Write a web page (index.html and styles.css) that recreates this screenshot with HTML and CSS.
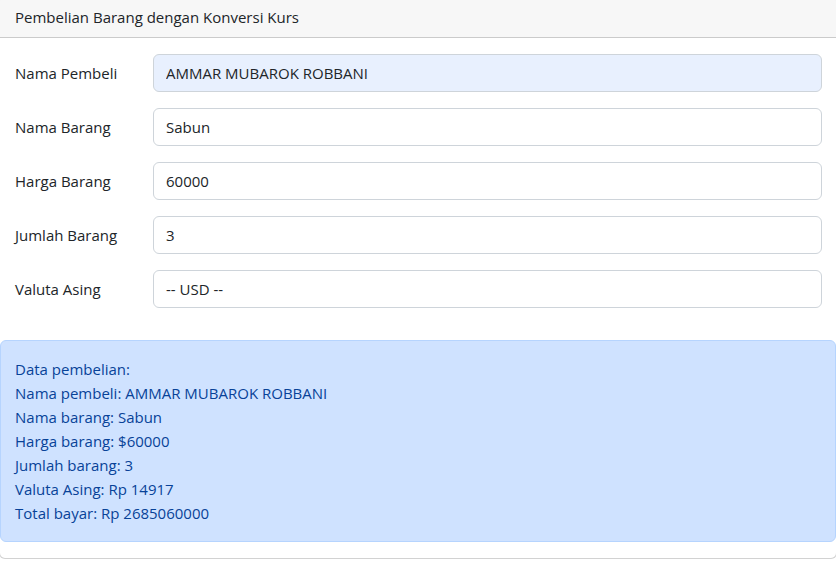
FILE: index.html
```html
<!DOCTYPE html>
<html lang="id">
<head>
<meta charset="utf-8">
<title>Pembelian Barang dengan Konversi Kurs</title>
<link rel="stylesheet" href="styles.css">
</head>
<body>
<div class="card">
  <div class="card-header">Pembelian Barang dengan Konversi Kurs</div>
  <form class="card-body">
    <div class="row">
      <label class="label" for="pembeli">Nama Pembeli</label>
      <input class="control autofill" id="pembeli" type="text" value="AMMAR MUBAROK ROBBANI">
    </div>
    <div class="row">
      <label class="label" for="barang">Nama Barang</label>
      <input class="control" id="barang" type="text" value="Sabun">
    </div>
    <div class="row">
      <label class="label" for="harga">Harga Barang</label>
      <input class="control" id="harga" type="text" value="60000">
    </div>
    <div class="row">
      <label class="label" for="jumlah">Jumlah Barang</label>
      <input class="control" id="jumlah" type="text" value="3">
    </div>
    <div class="row">
      <label class="label" for="valuta">Valuta Asing</label>
      <div class="control select" id="valuta">-- USD --</div>
    </div>
  </form>
  <div class="alert">
    <div>Data pembelian:</div>
    <div>Nama pembeli: AMMAR MUBAROK ROBBANI</div>
    <div>Nama barang: Sabun</div>
    <div>Harga barang: $60000</div>
    <div>Jumlah barang: 3</div>
    <div>Valuta Asing: Rp 14917</div>
    <div>Total bayar: Rp 2685060000</div>
  </div>
</div>
</body>
</html>
```
FILE: styles.css
```css
html, body {
  margin: 0;
  padding: 0;
  background: #fff;
  overflow: hidden;
}
body {
  font-family: "Open Sans", "Noto Sans", sans-serif;
  font-size: 15px;
  line-height: 24px;
  color: #212529;
}
.card {
  width: 838px;
  margin: -4px 0 0 -1px;
  border: 1px solid rgba(0,0,0,.175);
  border-radius: 6px;
  box-sizing: border-box;
  background: #fff;
}
.card-header {
  padding: 8px 16px 8px 15px;
  background: #f7f7f7;
  border-bottom: 1px solid rgba(0,0,0,.175);
  border-radius: 5px 5px 0 0;
}
.card-body {
  padding: 16px 14px 16px 15px;
  margin: 0;
}
.row {
  display: grid;
  grid-template-columns: 138px 1fr;
  margin-bottom: 16px;
}
.label {
  padding-top: 7px;
  padding-bottom: 7px;
}
.control {
  display: block;
  box-sizing: border-box;
  width: 100%;
  height: 38px;
  margin: 0;
  padding: 6px 12px;
  font: inherit;
  color: #212529;
  background: #fff;
  border: 1px solid #ced4da;
  border-radius: 6px;
  outline: none;
}
.autofill {
  background: #e8f0fe;
}
.select {
  line-height: 24px;
}
.alert {
  margin: 0 0 16px 0;
  padding: 16px 14px;
  background: #cfe2ff;
  border: 1px solid #b6d4fe;
  border-radius: 6px;
  color: #084298;
}
```
